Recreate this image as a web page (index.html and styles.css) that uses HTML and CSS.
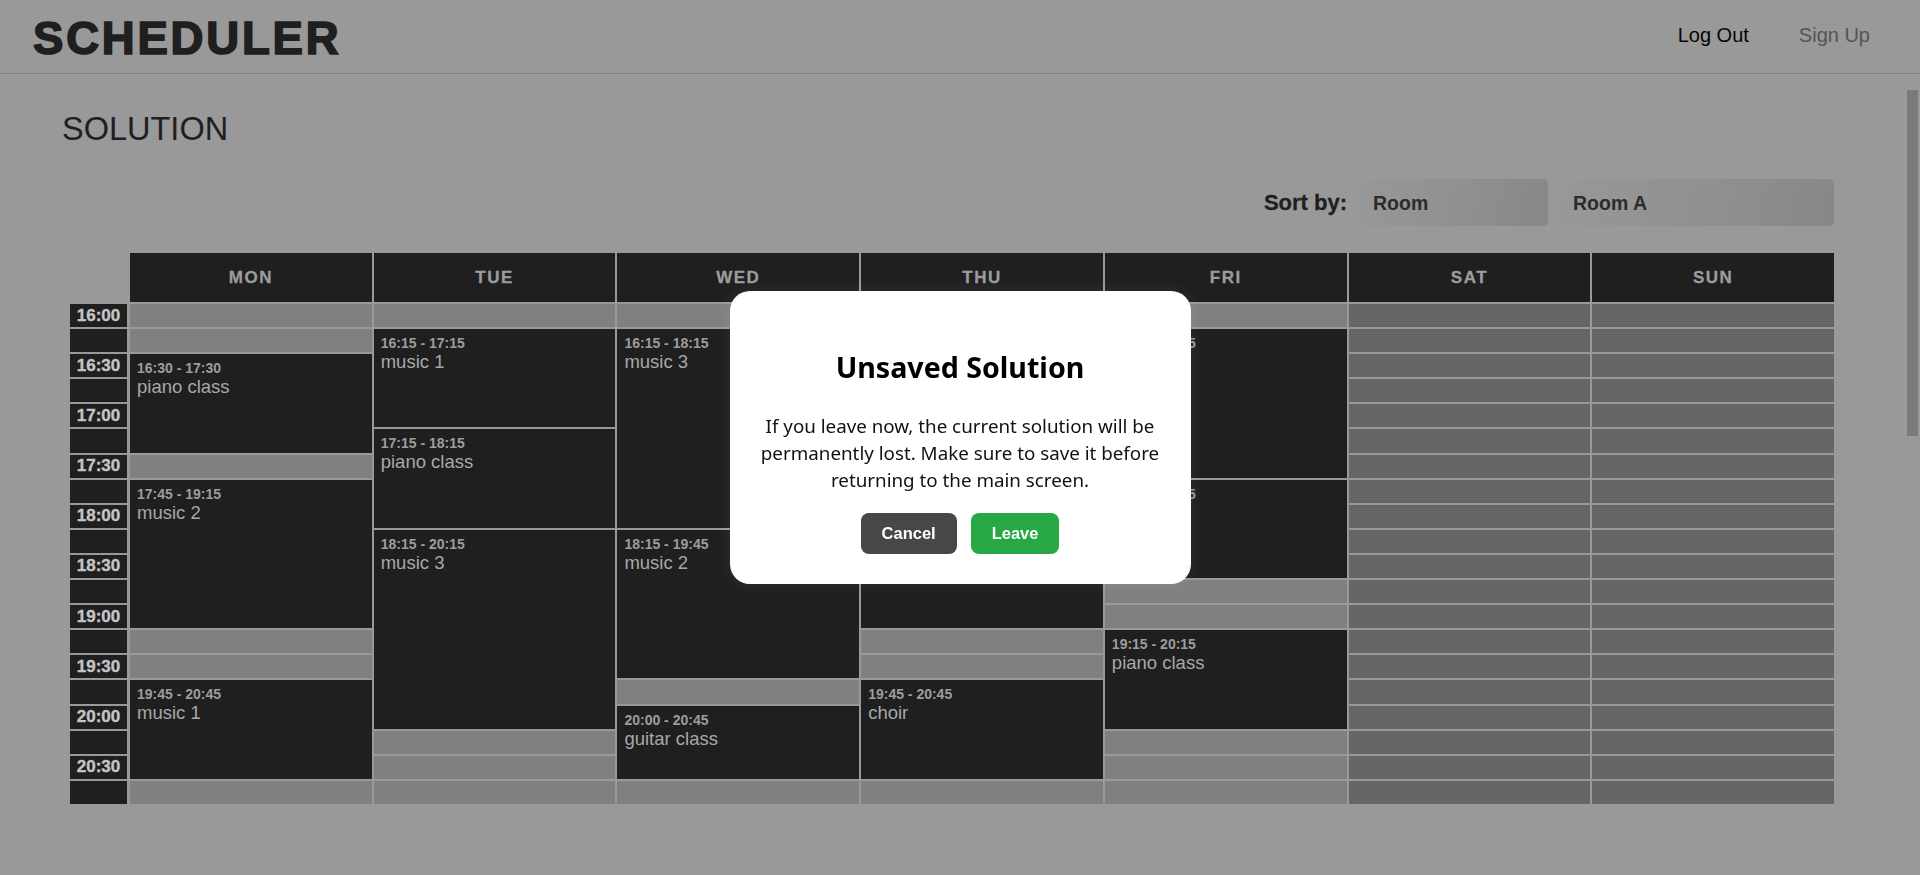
FILE: index.html
```html
<!DOCTYPE html>
<html lang="en">
<head>
<meta charset="utf-8">
<title>Scheduler - Solution</title>
<link rel="stylesheet" href="styles.css">
</head>
<body>
<header class="topbar">
  <h1 class="logo">SCHEDULER</h1>
  <nav class="nav">
    <a class="nav-link nav-link--active" href="#">Log Out</a>
    <a class="nav-link" href="#">Sign Up</a>
  </nav>
</header>
<div class="page">
  <main class="main">
    <h2 class="page-title">SOLUTION</h2>
    <div class="sort-row">
      <span class="sort-label">Sort by:</span>
      <select class="select select--type"><option>Room</option></select>
      <select class="select select--value"><option>Room A</option></select>
    </div>
    <div class="schedule">
      <div class="col col--time">
        <div class="head head--blank"></div>
        <div class="time">16:00</div><div class="time"></div>
        <div class="time">16:30</div><div class="time"></div>
        <div class="time">17:00</div><div class="time"></div>
        <div class="time">17:30</div><div class="time"></div>
        <div class="time">18:00</div><div class="time"></div>
        <div class="time">18:30</div><div class="time"></div>
        <div class="time">19:00</div><div class="time"></div>
        <div class="time">19:30</div><div class="time"></div>
        <div class="time">20:00</div><div class="time"></div>
        <div class="time">20:30</div><div class="time"></div>
      </div>

      <div class="col">
        <div class="head">MON</div>
        <div class="slot empty span-1"></div>
        <div class="slot empty span-1"></div>
        <div class="slot event span-4"><span class="ev-time">16:30 - 17:30</span><span class="ev-name">piano class</span></div>
        <div class="slot empty span-1"></div>
        <div class="slot event span-6"><span class="ev-time">17:45 - 19:15</span><span class="ev-name">music 2</span></div>
        <div class="slot empty span-1"></div>
        <div class="slot empty span-1"></div>
        <div class="slot event span-4"><span class="ev-time">19:45 - 20:45</span><span class="ev-name">music 1</span></div>
        <div class="slot empty span-1"></div>
      </div>

      <div class="col">
        <div class="head">TUE</div>
        <div class="slot empty span-1"></div>
        <div class="slot event span-4"><span class="ev-time">16:15 - 17:15</span><span class="ev-name">music 1</span></div>
        <div class="slot event span-4"><span class="ev-time">17:15 - 18:15</span><span class="ev-name">piano class</span></div>
        <div class="slot event span-8"><span class="ev-time">18:15 - 20:15</span><span class="ev-name">music 3</span></div>
        <div class="slot empty span-1"></div>
        <div class="slot empty span-1"></div>
        <div class="slot empty span-1"></div>
      </div>

      <div class="col">
        <div class="head">WED</div>
        <div class="slot empty span-1"></div>
        <div class="slot event span-8"><span class="ev-time">16:15 - 18:15</span><span class="ev-name">music 3</span></div>
        <div class="slot event span-6"><span class="ev-time">18:15 - 19:45</span><span class="ev-name">music 2</span></div>
        <div class="slot empty span-1"></div>
        <div class="slot event span-3"><span class="ev-time">20:00 - 20:45</span><span class="ev-name">guitar class</span></div>
        <div class="slot empty span-1"></div>
      </div>

      <div class="col">
        <div class="head">THU</div>
        <div class="slot empty span-1"></div>
        <div class="slot event span-6"><span class="ev-time">16:15 - 17:45</span><span class="ev-name">music 1</span></div>
        <div class="slot event span-6"><span class="ev-time">17:45 - 19:15</span><span class="ev-name">guitar class</span></div>
        <div class="slot empty span-1"></div>
        <div class="slot empty span-1"></div>
        <div class="slot event span-4"><span class="ev-time">19:45 - 20:45</span><span class="ev-name">choir</span></div>
        <div class="slot empty span-1"></div>
      </div>

      <div class="col">
        <div class="head">FRI</div>
        <div class="slot empty span-1"></div>
        <div class="slot event span-6"><span class="ev-time">16:15 - 17:45</span><span class="ev-name">music 2</span></div>
        <div class="slot event span-4"><span class="ev-time">17:45 - 18:45</span><span class="ev-name">music 3</span></div>
        <div class="slot empty span-1"></div>
        <div class="slot empty span-1"></div>
        <div class="slot event span-4"><span class="ev-time">19:15 - 20:15</span><span class="ev-name">piano class</span></div>
        <div class="slot empty span-1"></div>
        <div class="slot empty span-1"></div>
        <div class="slot empty span-1"></div>
      </div>

      <div class="col col--weekend">
        <div class="head">SAT</div>
        <div class="slot off span-1"></div><div class="slot off span-1"></div><div class="slot off span-1"></div><div class="slot off span-1"></div>
        <div class="slot off span-1"></div><div class="slot off span-1"></div><div class="slot off span-1"></div><div class="slot off span-1"></div>
        <div class="slot off span-1"></div><div class="slot off span-1"></div><div class="slot off span-1"></div><div class="slot off span-1"></div>
        <div class="slot off span-1"></div><div class="slot off span-1"></div><div class="slot off span-1"></div><div class="slot off span-1"></div>
        <div class="slot off span-1"></div><div class="slot off span-1"></div><div class="slot off span-1"></div><div class="slot off span-1"></div>
      </div>

      <div class="col col--weekend">
        <div class="head">SUN</div>
        <div class="slot off span-1"></div><div class="slot off span-1"></div><div class="slot off span-1"></div><div class="slot off span-1"></div>
        <div class="slot off span-1"></div><div class="slot off span-1"></div><div class="slot off span-1"></div><div class="slot off span-1"></div>
        <div class="slot off span-1"></div><div class="slot off span-1"></div><div class="slot off span-1"></div><div class="slot off span-1"></div>
        <div class="slot off span-1"></div><div class="slot off span-1"></div><div class="slot off span-1"></div><div class="slot off span-1"></div>
        <div class="slot off span-1"></div><div class="slot off span-1"></div><div class="slot off span-1"></div><div class="slot off span-1"></div>
      </div>
    </div>
  </main>
  <div class="scroll-track"><div class="scroll-thumb"></div></div>
</div>

<div class="backdrop">
  <div class="modal" role="dialog" aria-modal="true">
    <h3 class="modal-title">Unsaved Solution</h3>
    <p class="modal-text">If you leave now, the current solution will be permanently lost. Make sure to save it before returning to the main screen.</p>
    <div class="modal-actions">
      <button class="btn btn--cancel">Cancel</button>
      <button class="btn btn--leave">Leave</button>
    </div>
  </div>
</div>
</body>
</html>
```
FILE: styles.css
```css
:root {
  --row: 23.1px;
  --gap: 2px;
}
html, body {
  margin: 0;
  height: 100%;
}
body {
  background: #999999;
  font-family: "Liberation Sans", Arial, sans-serif;
  overflow: hidden;
}

/* header */
.topbar {
  height: 73px;
  border-bottom: 1px solid #808080;
  display: flex;
  align-items: center;
  justify-content: space-between;
  padding: 0 50px 0 33px;
}
.logo {
  margin: 4px 0 0;
  font-size: 45.5px;
  font-weight: bold;
  letter-spacing: 2.8px;
  color: #1f1f1f;
  line-height: 1;
  -webkit-text-stroke: 1.7px #1f1f1f;
}
.nav {
  display: flex;
  gap: 50px;
  margin-top: -2px;
}
.nav-link {
  font-size: 20px;
  color: #555555;
  text-decoration: none;
}
.nav-link--active {
  color: #050505;
}

/* page area */
.page {
  display: flex;
  height: calc(100% - 74px);
}
.main {
  flex: 1;
  padding: 0 71px 0 62px;
}
.scroll-track {
  width: 15px;
}
.scroll-thumb {
  margin: 16px 0 0 2px;
  width: 11px;
  height: 346px;
  background: #7a7a7a;
}

.page-title {
  margin: 37px 0 31px;
  font-size: 32.5px;
  font-weight: normal;
  color: #202020;
  line-height: 37px;
}

.sort-row {
  display: flex;
  justify-content: flex-end;
  align-items: center;
  gap: 12px;
}
.sort-label {
  font-size: 22px;
  font-weight: bold;
  color: #1f1f1f;
  margin-right: 1px;
  -webkit-text-stroke: 0.3px #1f1f1f;
}
.select {
  appearance: none;
  -webkit-appearance: none;
  height: 47px;
  border: none;
  border-radius: 5px;
  padding: 0 13px;
  font-family: "Liberation Sans", Arial, sans-serif;
  font-size: 19.5px;
  font-weight: bold;
  color: #2b2b2b;
  background: linear-gradient(100deg, #989898 0%, #8f8f8f 60%, #878787 100%);
}
.select--type { width: 188px; }
.select--value { width: 274px; }

/* schedule */
.schedule {
  margin: 27px 0 0 8px;
  display: grid;
  grid-template-columns: 58px repeat(7, 1fr);
  column-gap: 2px;
}
.col {
  display: flex;
  flex-direction: column;
  gap: var(--gap);
}
.head {
  height: 49px;
  background: #1f1f1f;
  color: #9c9c9c;
  font-size: 17px;
  font-weight: bold;
  letter-spacing: 1.5px;
  display: flex;
  align-items: center;
  justify-content: center;
  -webkit-text-stroke: 0.3px #9c9c9c;
}
.head--blank {
  background: transparent;
}
.time {
  width: 57px;
  height: var(--row);
  background: #1f1f1f;
  color: #c4c4c4;
  font-size: 17px;
  font-weight: bold;
  display: flex;
  align-items: center;
  justify-content: center;
  -webkit-text-stroke: 0.4px #c4c4c4;
}
.slot {
  box-sizing: border-box;
}
.span-1 { height: var(--row); }
.span-3 { height: calc(var(--row) * 3 + var(--gap) * 2); }
.span-4 { height: calc(var(--row) * 4 + var(--gap) * 3); }
.span-6 { height: calc(var(--row) * 6 + var(--gap) * 5); }
.span-8 { height: calc(var(--row) * 8 + var(--gap) * 7); }

.empty { background: #808080; }
.off { background: #666666; }
.event {
  background: #1f1f1f;
  padding: 6px 7px;
  display: flex;
  flex-direction: column;
  white-space: nowrap;
}
.ev-time {
  font-size: 14px;
  font-weight: bold;
  color: #9d9d9d;
  line-height: 16px;
}
.ev-name {
  font-size: 18.5px;
  color: #a8a8a8;
}

/* modal */
.backdrop {
  position: fixed;
  inset: 0;
  display: flex;
  align-items: center;
  justify-content: center;
}
.modal {
  width: 461px;
  box-sizing: border-box;
  padding: 30px 27px;
  background: #ffffff;
  border-radius: 20px;
  text-align: center;
  font-family: "Noto Sans", "Open Sans", sans-serif;
  color: #000;
  box-shadow: 0 0 18px rgba(255, 255, 255, 0.08);
}
.modal-title {
  margin: 28px 0 28px;
  font-size: 28.6px;
  line-height: 36px;
  font-weight: bold;
}
.modal-text {
  margin: 0 0 19px;
  font-size: 18.8px;
  line-height: 27px;
  color: #111;
}
.modal-actions {
  display: flex;
  justify-content: center;
  gap: 14px;
}
.btn {
  border: none;
  border-radius: 8px;
  height: 41px;
  padding: 0 21px;
  font-family: "Liberation Sans", Arial, sans-serif;
  font-size: 16.5px;
  font-weight: bold;
  color: #ffffff;
}
.btn--cancel { background: #474747; }
.btn--leave { background: #28a745; }
```
